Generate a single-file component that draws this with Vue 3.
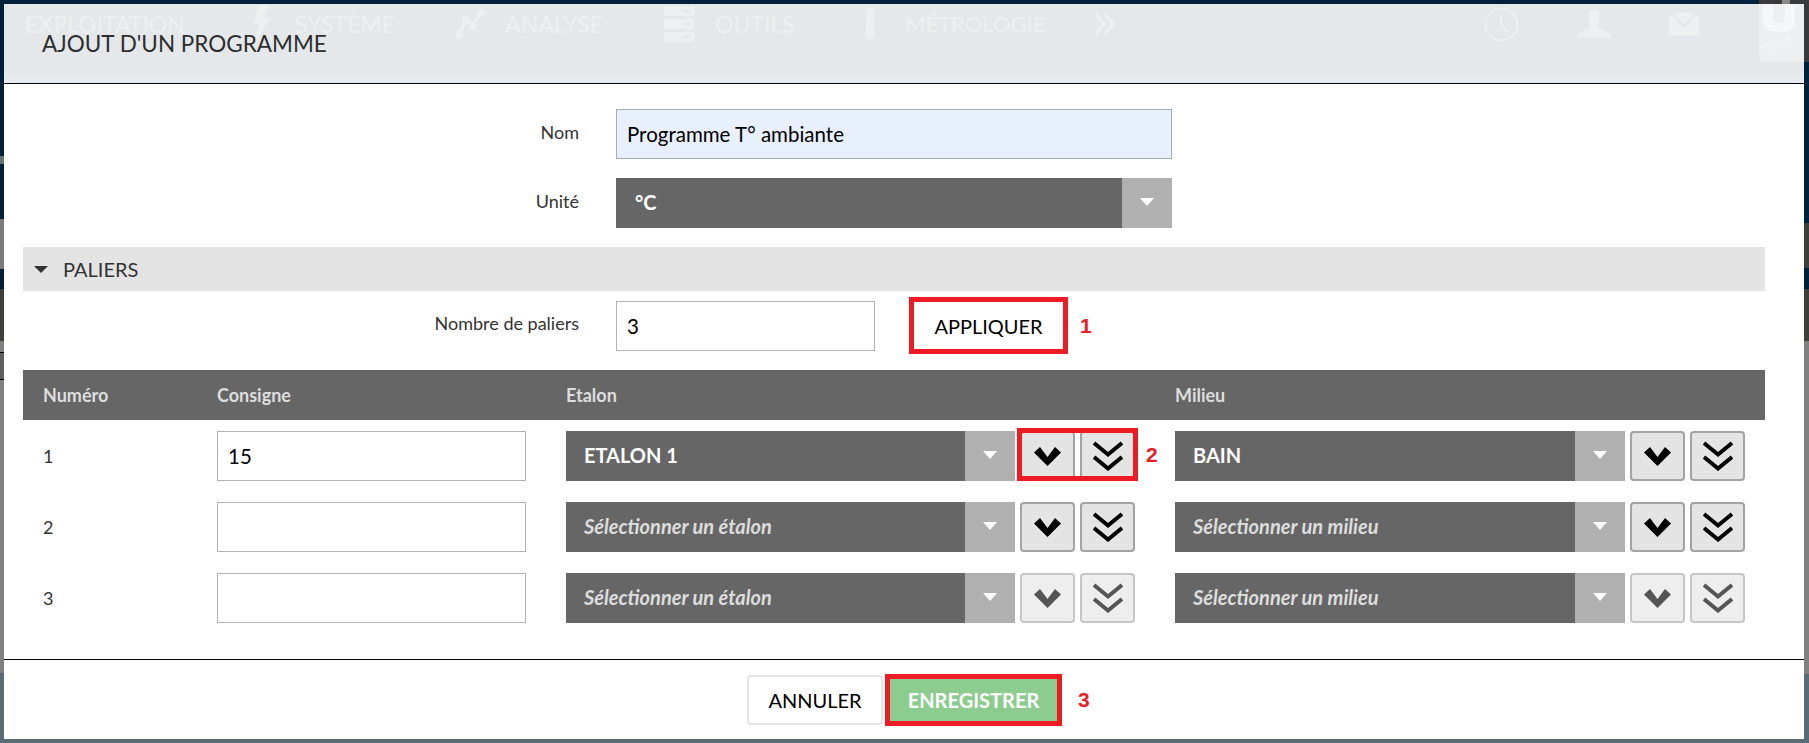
<template>
  <div class="page">
    <div class="dialog">
      <header class="dialog-header">
        <!-- menu de la page, visible à travers l'en-tête -->
        <div class="ghost-nav">
          <span>EXPLOITATION</span>
          <svg width="20" height="38" viewBox="0 0 20 38"><path d="M9 0h11l-6 13h6L5 38l4-19H3z" /></svg>
          <span>SYSTÈME</span>
          <svg width="30" height="32" viewBox="0 0 30 32"><circle cx="4" cy="27" r="4" /><circle cx="11" cy="12" r="4" /><circle cx="18" cy="18" r="4" /><circle cx="26" cy="5" r="4" /><path class="line thick" d="M4 27l7-15 7 6 8-13" /></svg>
          <span>ANALYSE</span>
          <svg width="30" height="36" viewBox="0 0 30 36"><path d="M2 0h26q2 0 2 2v8H0V2q0-2 2-2zM0 13h30v10H0zM0 26h30v8q0 2-2 2H2q-2 0-2-2z" /><rect class="slot" x="20" y="3.500" width="7" height="3" /><rect class="slot" x="20" y="16.500" width="7" height="3" /><rect class="slot" x="20" y="29.500" width="7" height="3" /></svg>
          <span>OUTILS</span>
          <svg width="10" height="32" viewBox="0 0 10 32"><path d="M5 0q4 0 4 4v18q1 1 1 5a5 5 0 0 1-10 0q0-4 1-5V4q0-4 4-4z" /></svg>
          <span class="metrologie">MÉTROLOGIE</span>
          <svg width="22" height="22" viewBox="0 0 22 22"><path class="line thick" d="M2 1l8 10-8 10M11 1l8 10-8 10" /></svg>
          <svg width="35" height="35" viewBox="0 0 35 35"><circle class="line" cx="17.500" cy="17.500" r="16" /><path class="line" d="M17 7v11l7 7" /></svg>
          <svg width="32" height="28" viewBox="0 0 32 28"><path d="M11 0h10v13l-2 4 13 6v5H0v-5l13-6-2-4z" /></svg>
          <svg width="30" height="22" viewBox="0 0 30 22"><path d="M0 0l15 15L30 0v22H0zM4 0h22L15 11z" /></svg>
        </div>
        <div class="ghost-logo">
          <svg width="45" height="58" viewBox="0 0 45 58"><path class="logo-j" d="M4 0h10v14q0 5 6 5t6-5V0h10v16q0 12-16 12T4 16z" /><path class="logo-line" d="M2 44l8-5 6 9 12-14 9 8" /></svg>
        </div>
        <h1 class="dialog-title">AJOUT D'UN PROGRAMME</h1>
      </header>

      <div class="dialog-body">
        <div class="form-row">
          <label class="form-label">Nom</label>
          <input class="text-input name-input" value="Programme T° ambiante" />
        </div>
        <div class="form-row">
          <label class="form-label">Unité</label>
          <div class="select unit-select">
            <span class="select-text">°C</span>
            <span class="select-arrow"></span>
          </div>
        </div>

        <div class="section-band">
          <span class="band-arrow"></span>
          <span>PALIERS</span>
        </div>

        <div class="form-row count-row">
          <label class="form-label">Nombre de paliers</label>
          <input class="text-input count-input" value="3" />
          <button class="apply-btn">APPLIQUER</button>
          <span class="mark-number">1</span>
        </div>

        <div class="steps-head">
          <span>Numéro</span>
          <span>Consigne</span>
          <span>Etalon</span>
          <span>Milieu</span>
        </div>

        <div class="steps">
          <div v-for="(step, index) in steps" :key="step.num" class="step-row">
            <span class="step-num">{{ step.num }}</span>
            <input class="text-input step-input" :value="step.consigne" />

            <div class="step-cell">
              <div class="select">
                <span class="select-text" :class="{ placeholder: !step.etalon }">{{ step.etalon || 'Sélectionner un étalon' }}</span>
                <span class="select-arrow"></span>
              </div>
              <div class="btn-pair">
                <button class="icon-btn" :class="{ disabled: index === 2 }">
                  <svg width="27" height="19" viewBox="0 0 27 19"><polygon points="0,5.500 6,0 13.500,10 21,0 27,5.500 13.500,19" /></svg>
                </button>
                <button class="icon-btn" :class="{ disabled: index === 2 }">
                  <svg width="30" height="30" viewBox="0 0 30 30"><path class="chevrons" d="M1 2L15 13.500 29 2M1 16L15 27.500 29 16" /></svg>
                </button>
                <span v-if="index === 0" class="mark-box"></span>
                <span v-if="index === 0" class="mark-number pair-number">2</span>
              </div>
            </div>

            <div class="step-cell">
              <div class="select milieu-select">
                <span class="select-text" :class="{ placeholder: !step.milieu }">{{ step.milieu || 'Sélectionner un milieu' }}</span>
                <span class="select-arrow"></span>
              </div>
              <div class="btn-pair">
                <button class="icon-btn" :class="{ disabled: index === 2 }">
                  <svg width="27" height="19" viewBox="0 0 27 19"><polygon points="0,5.500 6,0 13.500,10 21,0 27,5.500 13.500,19" /></svg>
                </button>
                <button class="icon-btn" :class="{ disabled: index === 2 }">
                  <svg width="30" height="30" viewBox="0 0 30 30"><path class="chevrons" d="M1 2L15 13.500 29 2M1 16L15 27.500 29 16" /></svg>
                </button>
              </div>
            </div>
          </div>
        </div>
      </div>

      <footer class="dialog-footer">
        <button class="cancel-btn">ANNULER</button>
        <button class="save-btn">ENREGISTRER</button>
        <span class="mark-number">3</span>
      </footer>
    </div>
  </div>
</template>

<script setup>
const steps = [
  { num: 1, consigne: '15', etalon: 'ETALON 1', milieu: 'BAIN' },
  { num: 2, consigne: '', etalon: '', milieu: '' },
  { num: 3, consigne: '', etalon: '', milieu: '' }
];
</script>

<style>
html,
body {
  margin: 0;
  overflow: hidden;
}
</style>

<style scoped>
.page {
  width: 1809px;
  height: 743px;
  padding: 4px 5px 4px 4px;
  box-sizing: border-box;
  font-family: Lato, sans-serif;
  background:
    linear-gradient(to right, #00213c 1759px, #3a3a3a 1759px, #3a3a3a 1782px, #8a8a8a 1782px, #8a8a8a 1790px, #3a3a3a 1790px) top / 100% 4px no-repeat,
    linear-gradient(to bottom, #00213c 156px, #6b6f72 156px, #6b6f72 164px, #00213c 164px, #00213c 219px, #7a7a7a 219px, #7a7a7a 269px, #00213c 269px, #00213c 289px, #3c3f3a 289px, #3c3f3a 341px, #808080 341px, #808080 352px, #000 352px, #000 353px, #5f5f5f 353px, #5f5f5f 379px, #000 379px, #000 380px, #808080 380px, #808080 673px, #5a6b75 673px) left / 4px 100% no-repeat,
    linear-gradient(to bottom, #3a3a3a 62px, #00213c 62px, #00213c 223px, #3c3f3a 223px, #3c3f3a 268px, #00213c 268px, #00213c 289px, #3c3f3a 289px, #3c3f3a 341px, #808080 341px, #808080 674px, #5a6b75 674px) right / 5px 100% no-repeat,
    #5a6b75;
}

.dialog {
  height: 735px;
  display: flex;
  flex-direction: column;
  background: #fff;
}

/* En-tête */
.dialog-header {
  position: relative;
  height: 79px;
  flex: none;
  overflow: hidden;
  background: linear-gradient(to bottom, #e5e8eb 70px, #e6ebef 74px);
  border-bottom: 1px solid #000;
}

.ghost-nav {
  position: absolute;
  top: 0;
  left: 0;
  height: 40px;
  padding-left: 21px;
  display: grid;
  grid-template-columns: 225px 45px 160px 50px 159px 51px 150px 40px 189px 390px 94px 91px 40px;
  align-items: center;
  color: #edf0f1;
  font-size: 23px;
  line-height: 18px;
}

.ghost-nav .metrologie {
  font-size: 22px;
}

.ghost-nav svg {
  fill: #edf0f1;
}

.ghost-nav .line {
  fill: none;
  stroke: #edf0f1;
  stroke-width: 2;
}

.ghost-nav .thick {
  stroke-width: 3;
}

.ghost-nav .slot {
  fill: #e5e8eb;
}

.ghost-logo {
  position: absolute;
  top: 0;
  right: 0;
  width: 45px;
  height: 58px;
  background: #edeff1;
  border-bottom-left-radius: 6px;
}

.ghost-logo svg {
  display: block;
}

.logo-j {
  fill: #f6f7f8;
}

.logo-line {
  fill: none;
  stroke: #f8f9f9;
}

.dialog-title {
  position: relative;
  margin: 0;
  padding: 30px 0 0 38px;
  font-size: 22.500px;
  font-weight: 400;
  line-height: 20px;
  color: #2e2e2e;
}

/* Formulaire */
.dialog-body {
  flex: 1;
  padding: 25px 39px 0 19px;
}

.form-row {
  display: flex;
  align-items: center;
  margin-bottom: 19px;
}

.form-label {
  width: 556px;
  margin-right: 37px;
  padding-bottom: 5px;
  text-align: right;
  font-size: 18px;
  color: #333;
}

.text-input {
  height: 50px;
  padding: 0 10px;
  box-sizing: border-box;
  border: 1px solid #b3b3b3;
  border-radius: 0;
  outline: none;
  background: #fff;
  font-family: Lato, sans-serif;
  font-size: 20.500px;
  color: #000;
}

.name-input {
  width: 556px;
  background: #e8f0fe;
  border-color: #a5acb8;
}

.count-row {
  margin: 6px 0 16px;
}

.count-input {
  width: 259px;
}

.select {
  flex: none;
  display: flex;
  height: 50px;
  width: 449px;
  background: #666;
  color: #fff;
}

.unit-select.select {
  width: 556px;
}

.unit-select .select-text {
  padding-left: 19px;
}

.milieu-select.select {
  width: 450px;
}

.select-text {
  flex: 1;
  padding-left: 18px;
  line-height: 48px;
  font-size: 20px;
  font-weight: 700;
}

.select-text.placeholder {
  font-style: italic;
  color: #ddd;
}

.select-arrow {
  position: relative;
  width: 50px;
  background: #b0b0b0;
}

.select-arrow::after {
  content: '';
  position: absolute;
  top: 20px;
  left: 18px;
  border-left: 7px solid transparent;
  border-right: 7px solid transparent;
  border-top: 8px solid #fff;
}

.section-band {
  display: flex;
  align-items: center;
  height: 44px;
  padding-left: 11px;
  background: #e4e4e4;
  font-size: 20px;
  color: #333;
}

.band-arrow {
  width: 0;
  height: 0;
  margin-right: 15px;
  border-left: 7px solid transparent;
  border-right: 7px solid transparent;
  border-top: 7px solid #333;
}

.apply-btn {
  width: 159px;
  height: 57px;
  margin-left: 34px;
  border: 5px solid #ed1c24;
  background: #fff;
  font-family: Lato, sans-serif;
  font-size: 20px;
  color: #000;
}

.mark-number {
  margin-left: 12px;
  font-family: "Liberation Sans", Arial, sans-serif;
  font-size: 21px;
  font-weight: 700;
  color: #ed1c24;
}

/* Tableau des paliers */
.steps-head {
  display: grid;
  grid-template-columns: 194px 349px 609px 1fr;
  align-items: center;
  height: 50px;
  background: #666;
  font-size: 18px;
  font-weight: 700;
  color: #ddd;
}

.steps-head span:first-child {
  padding-left: 20px;
}

.steps {
  display: flex;
  flex-direction: column;
  gap: 21px;
  padding-top: 11px;
}

.step-row {
  display: grid;
  grid-template-columns: 194px 349px 609px 1fr;
  align-items: center;
}

.step-num {
  padding-left: 20px;
  font-size: 18px;
  color: #333;
}

.step-input {
  width: 309px;
}

.step-cell {
  display: flex;
  gap: 5px;
}

.btn-pair {
  position: relative;
  display: flex;
  gap: 5px;
}

.icon-btn {
  display: flex;
  align-items: center;
  justify-content: center;
  width: 55px;
  height: 50px;
  padding: 0;
  box-sizing: border-box;
  border: 2px solid #a3a3a3;
  border-radius: 4px;
  background: #e4e4e4;
}

.icon-btn polygon {
  fill: #000;
}

.chevrons {
  fill: none;
  stroke: #000;
  stroke-width: 4;
}

.icon-btn.disabled {
  background: #eee;
  border-color: #c6c6c6;
}

.icon-btn.disabled polygon {
  fill: #555;
}

.icon-btn.disabled .chevrons {
  stroke: #555;
}

.mark-box {
  position: absolute;
  top: -3px;
  left: -3px;
  right: -3px;
  bottom: 0;
  border: 5px solid #ed1c24;
}

.pair-number {
  position: absolute;
  top: 12px;
  left: 126px;
  margin: 0;
}

/* Pied */
.dialog-footer {
  flex: none;
  height: 79px;
  display: flex;
  align-items: center;
  border-top: 1px solid #000;
  padding-left: 743px;
  box-sizing: content-box;
}

.cancel-btn {
  width: 136px;
  height: 50px;
  border: 2px solid #e4e4e4;
  border-radius: 4px;
  background: #fff;
  font-family: Lato, sans-serif;
  font-size: 20px;
  color: #000;
}

.save-btn {
  width: 177px;
  height: 52px;
  margin-left: 2px;
  border: 5px solid #ed1c24;
  background: #8ccc8e;
  font-family: Lato, sans-serif;
  font-size: 20px;
  font-weight: 700;
  color: #fff;
}

.dialog-footer .mark-number {
  margin-left: 16px;
}
</style>
